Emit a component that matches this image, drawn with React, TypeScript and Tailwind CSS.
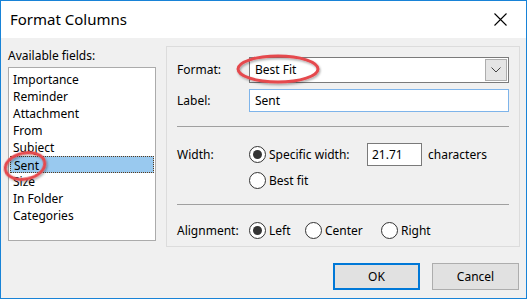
import React from "react";

const font = { fontFamily: '"Segoe UI", "Noto Sans", sans-serif' };

function Radio({ checked }: { checked?: boolean }) {
  return (
    <span className="flex h-[17px] w-[17px] shrink-0 items-center justify-center rounded-full border border-[#333] bg-white">
      {checked && <span className="h-[9px] w-[9px] rounded-full bg-[#333]" />}
    </span>
  );
}

const items = ["Importance", "Reminder", "Attachment", "From", "Subject", "Sent", "Size", "In Folder", "Categories"];

export default function App() {
  return (
    <div
      className="relative flex h-[299px] w-[527px] flex-col overflow-hidden border border-[#1883d7] bg-[#f0f0f0] text-[12px] text-black"
      style={font}
    >
      {/* Title bar */}
      <div className="flex h-[37px] shrink-0 items-center justify-between bg-white pl-[9px] pr-[19px]">
        <span className="text-[15px] leading-none">Format Columns</span>
        <svg width="13" height="13" viewBox="0 0 13 13">
          <path d="M0.5 0.5 L12.5 12.5 M12.5 0.5 L0.5 12.5" stroke="#000" strokeWidth="1.1" />
        </svg>
      </div>

      {/* Body */}
      <div className="flex flex-1 flex-col pl-[7px] pr-[6px] pt-[8px]">
        <div className="flex">
          {/* Left column */}
          <div className="flex w-[148px] flex-col">
            <div className="mt-[2px] h-[16px] leading-[16px]">Available fields:</div>
            <div className="mt-[3px] h-[174px] border border-[#ababab] bg-white px-[1px] pt-[3px]">
              {items.map((it) => (
                <div
                  key={it}
                  className={
                    "h-[17px] pl-[3px] leading-[17px] " +
                    (it === "Sent" ? "border border-dotted border-[#5a3a1a] bg-[#99c9ef] pl-[2px] leading-[15px]" : "")
                  }
                >
                  {it}
                </div>
              ))}
            </div>
          </div>

          {/* Group box */}
          <div className="ml-[10px] flex h-[201px] w-[354px] flex-col border border-[#dcdcdc] px-[10px] pt-[10px]">
            <div className="flex h-[26px] items-center">
              <span className="w-[72px]">Format:</span>
              <div className="flex h-[26px] flex-1 items-center justify-between border border-[#7a7a7a] bg-white pl-[5px] pr-[1px]">
                <span>Best Fit</span>
                <span className="flex h-[22px] w-[22px] items-center justify-center border border-[#adadad] bg-[#e5e5e5]">
                  <svg width="10" height="6" viewBox="0 0 10 6">
                    <path d="M0.5 0.5 L5 5 L9.5 0.5" stroke="#444" strokeWidth="1" fill="none" />
                  </svg>
                </span>
              </div>
            </div>
            <div className="mt-[6px] flex h-[23px] items-center">
              <span className="w-[72px]">Label:</span>
              <div className="flex h-[23px] flex-1 items-center border border-[#7eb4ea] bg-white pl-[5px]">Sent</div>
            </div>
            <div className="mt-[14px] h-px bg-[#a0a0a0]" />
            <div className="mt-[16px] flex h-[23px] items-center">
              <span className="w-[72px]">Width:</span>
              <Radio checked />
              <span className="ml-[3px] w-[98px]">Specific width:</span>
              <div className="flex h-[23px] w-[55px] items-center border border-[#7a7a7a] bg-white pl-[4px]">21.71</div>
              <span className="ml-[6px]">characters</span>
            </div>
            <div className="mt-[6px] flex h-[17px] items-center pl-[72px]">
              <Radio />
              <span className="ml-[3px]">Best fit</span>
            </div>
            <div className="mt-[15px] h-px bg-[#a0a0a0]" />
            <div className="mt-[17px] flex h-[17px] items-center">
              <span className="w-[72px]">Alignment:</span>
              <Radio checked />
              <span className="ml-[3px] w-[36px]">Left</span>
              <Radio />
              <span className="ml-[3px] w-[56px]">Center</span>
              <Radio />
              <span className="ml-[3px]">Right</span>
            </div>
          </div>
        </div>

        {/* Buttons */}
        <div className="mt-[16px] flex justify-end gap-[12px] pr-[1px]">
          <button className="flex h-[27px] w-[87px] items-center justify-center border-2 border-[#0078d7] bg-[#e1e1e1]">
            OK
          </button>
          <button className="flex h-[27px] w-[87px] items-center justify-center border border-[#adadad] bg-[#e1e1e1]">
            Cancel
          </button>
        </div>
      </div>

      {/* Red annotation ellipses */}
      <svg className="pointer-events-none absolute left-0 top-0" width="527" height="299">
        <defs>
          <filter id="sh" x="-20%" y="-50%" width="140%" height="200%">
            <feDropShadow dx="1" dy="1.5" stdDeviation="1.2" floodColor="#000" floodOpacity="0.35" />
          </filter>
        </defs>
        <ellipse cx="277" cy="68" rx="40" ry="13" fill="none" stroke="#e5484d" strokeWidth="3" filter="url(#sh)" />
        <ellipse cx="24" cy="165" rx="20" ry="13" fill="none" stroke="#e5484d" strokeWidth="3" filter="url(#sh)" transform="rotate(-12 24 165)" />
      </svg>
    </div>
  );
}
